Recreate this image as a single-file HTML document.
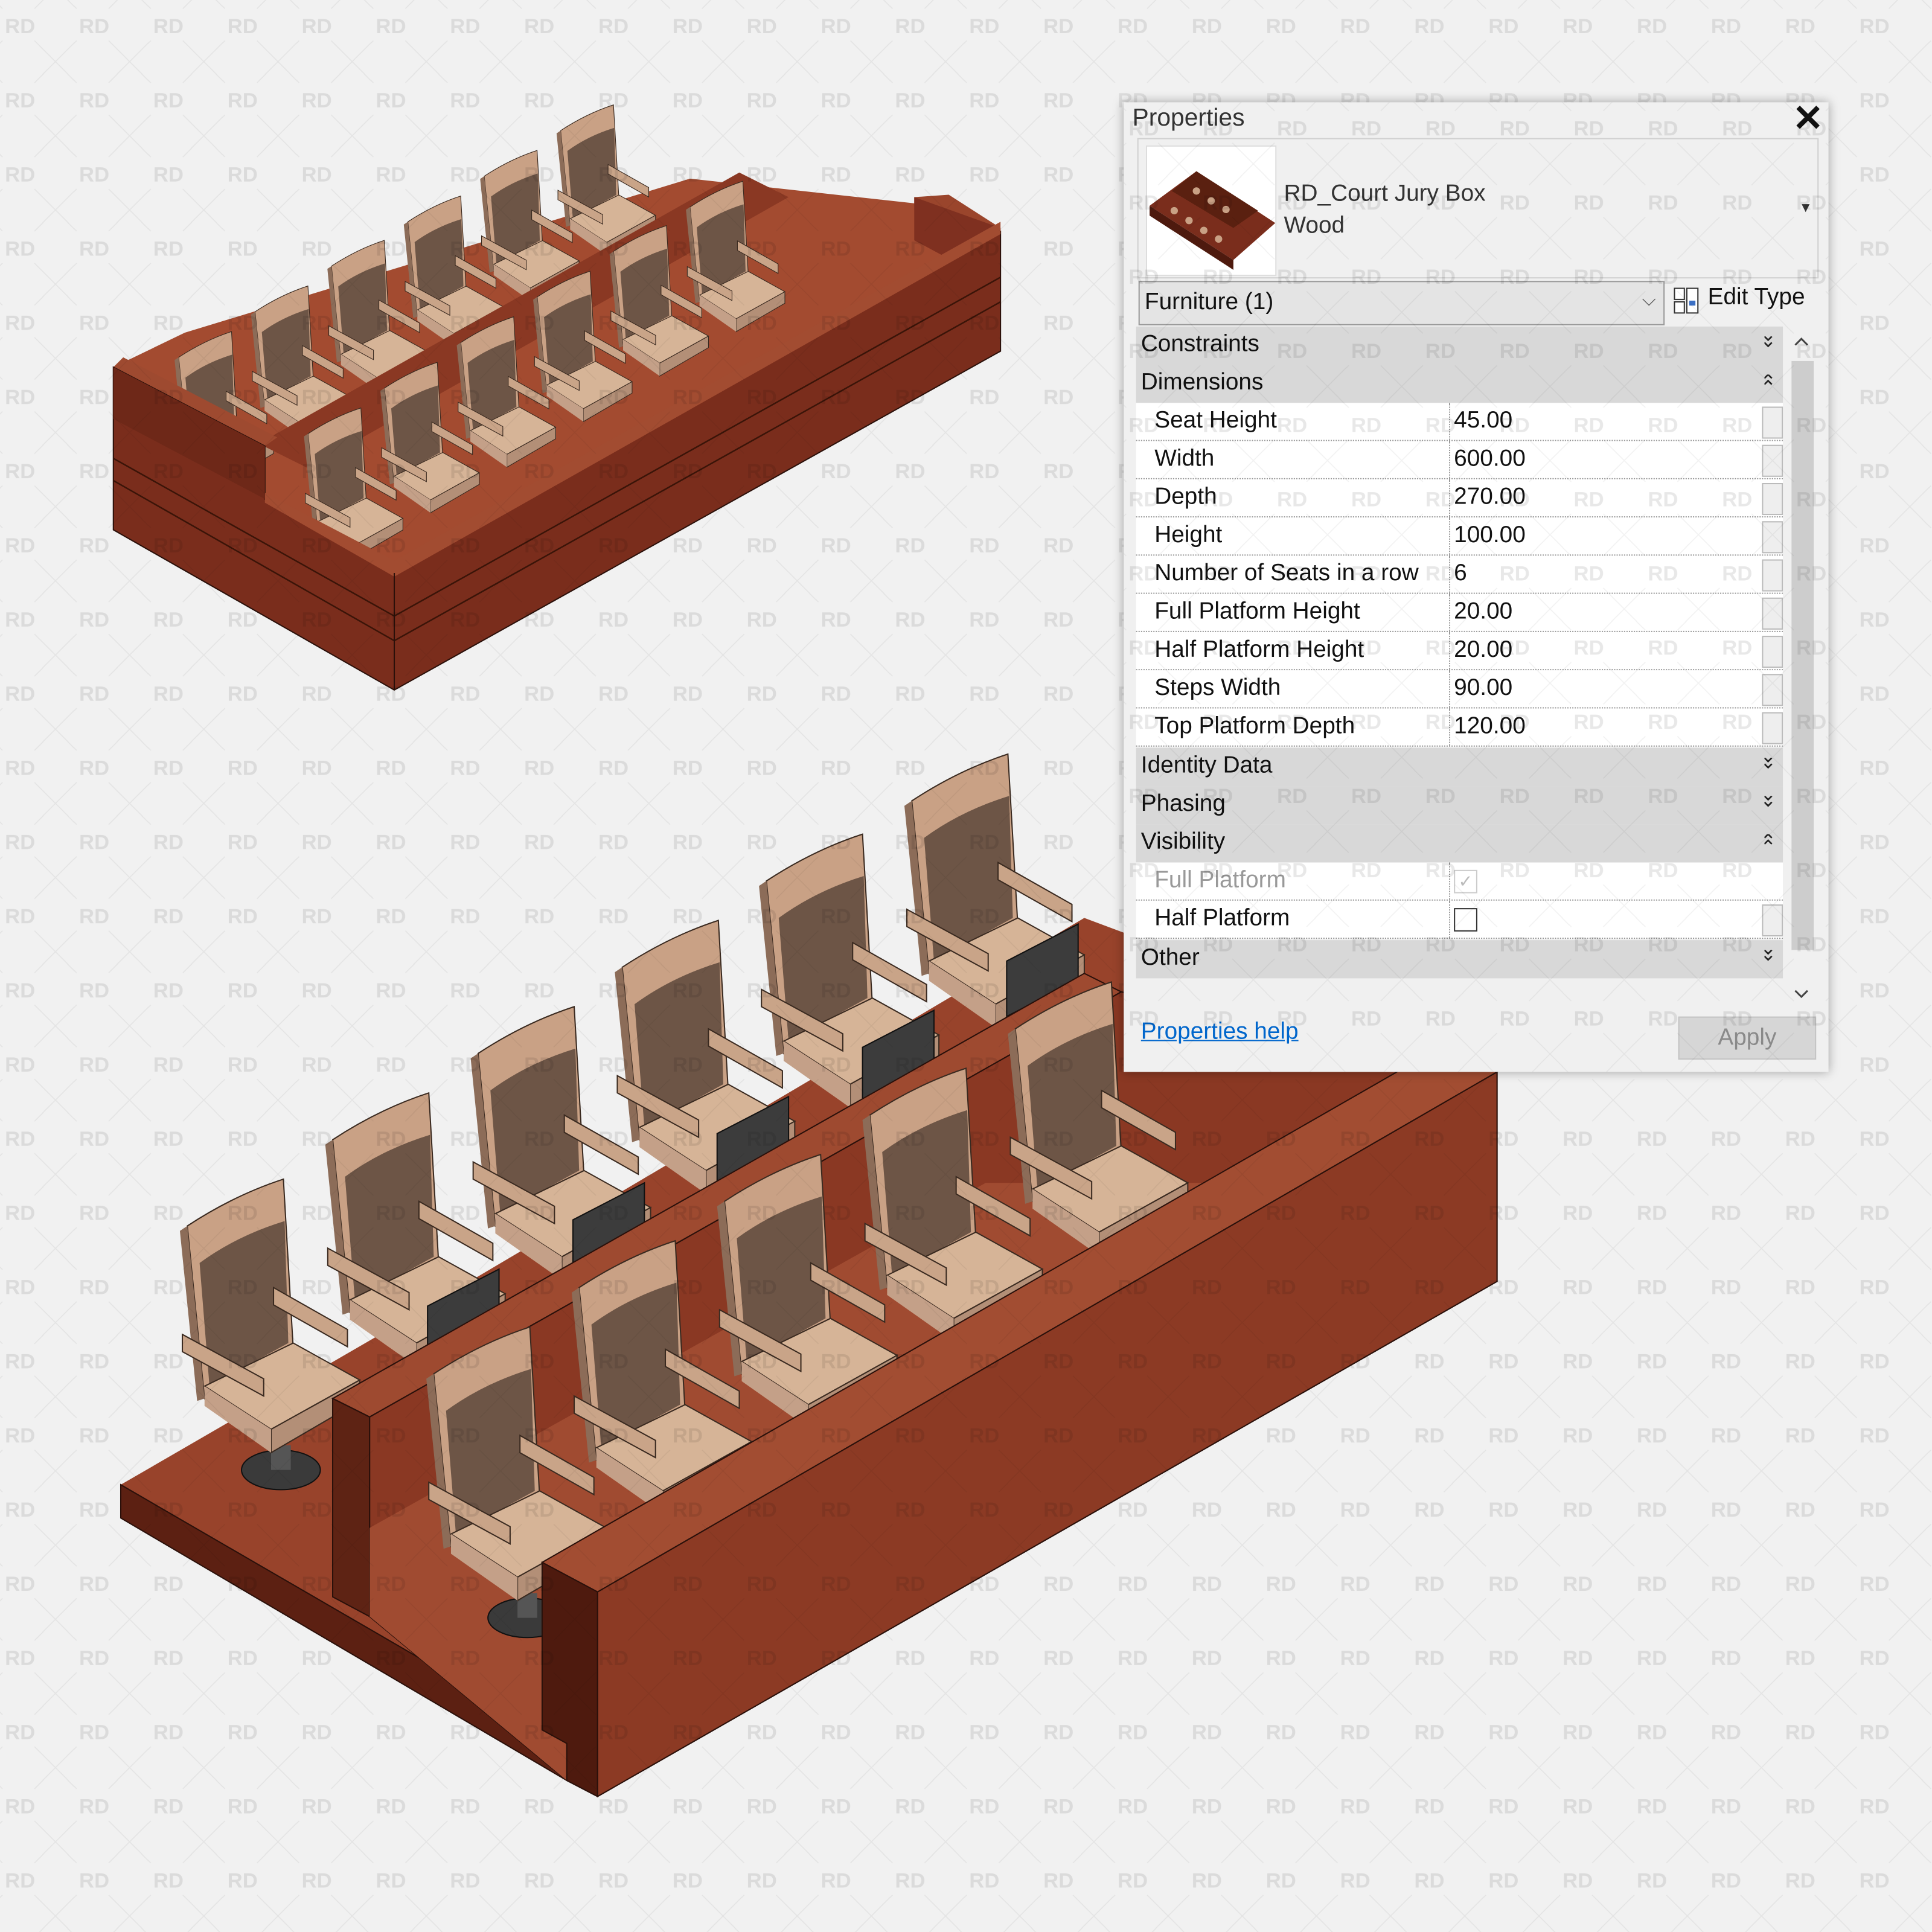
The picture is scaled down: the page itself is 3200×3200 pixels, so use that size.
<!DOCTYPE html>
<html><head><meta charset="utf-8"><style>
html,body{margin:0;padding:0;background:#f1f1f1;}
#wrap{position:relative;width:1568px;height:1568px;transform:scale(2.040816);transform-origin:0 0;overflow:hidden;font-family:"Liberation Sans",sans-serif;}
svg.full{position:absolute;left:0;top:0;}
#panel{position:absolute;left:912px;top:83px;width:572px;height:787px;background:#f0f0f0;box-shadow:0 0 8px rgba(0,0,0,.35);font-size:19px;color:#111;}
.abs{position:absolute;white-space:nowrap;}
.grp{position:absolute;left:10px;width:525px;height:31px;background:#d8d8d8;}
.grp span{position:absolute;left:4px;top:4px;}
.grp svg{position:absolute;right:8px;top:8px;}
.row{position:absolute;left:10px;width:525px;height:30px;background:#fff;border-bottom:1px dotted #999;}
.row .n{position:absolute;left:15px;top:4px;}
.row .v{position:absolute;left:254px;top:0;height:30px;border-left:1px dotted #999;padding-left:3px;line-height:30px;width:250px;}
.row .s{position:absolute;right:0;top:3px;width:15px;height:24px;border:1px solid #bbb;background:#eee;}
</style></head><body><div id="wrap">
<svg class="full" width="1568" height="1568" viewBox="0 0 1568 1568">
<defs>
<g id="chair">
<path d="M0,0 Q38,-25 78,-38 L86,100 L14,140 Z" fill="#c9a185" stroke="#3a2a20" stroke-width="1"/>
<path d="M-6,4 L0,0 L14,140 L8,142 Z" fill="#8c6c58"/>
<path d="M10,30 Q40,8 79,-4 L82,95 L18,130 Z" fill="#6d5546"/>
<path d="M14,130 L86,95 L140,125 L68,165 Z" fill="#d6b497" stroke="#3a2a20" stroke-width="1"/>
<path d="M68,165 L140,125 L140,142 L68,184 Z" fill="#b38f77" stroke="#3a2a20" stroke-width="1"/>
<path d="M68,165 L14,130 L14,146 L68,184 Z" fill="#c4a088"/>
<path d="M-4,88 L62,124 L62,138 L-4,102 Z" fill="#c9a488" stroke="#3a2a20" stroke-width="1"/>
<path d="M70,50 L130,84 L130,98 L70,64 Z" fill="#c9a488" stroke="#3a2a20" stroke-width="1"/>
</g>
<g id="base"><ellipse cx="76" cy="198" rx="32" ry="16" fill="#3a3a3a" stroke="#111"/><rect x="68" y="178" width="16" height="20" fill="#555"/></g>
<g id="dd"><path d="M0,0 L3,3 L6,0 M0,5 L3,8 L6,5" fill="none" stroke="#222" stroke-width="1.3"/></g>
<g id="du"><path d="M0,3 L3,0 L6,3 M0,8 L3,5 L6,8" fill="none" stroke="#222" stroke-width="1.3"/></g>
<pattern id="wm" patternUnits="userSpaceOnUse" width="60.2" height="60.2">
<text x="4" y="27" font-family="Liberation Sans" font-weight="bold" font-size="17" fill="rgba(0,0,0,0.09)">RD</text>
<g stroke="rgba(0,0,0,0.05)" stroke-width="0.8">
<path d="M28,33 L62,67 M62,33 L28,67"/><path d="M-32,33 L2,67 M2,33 L-32,67"/>
<path d="M28,-27 L62,7 M62,-27 L28,7"/><path d="M-32,-27 L2,7 M2,-27 L-32,7"/>
</g></pattern>
</defs>

<!-- TOP MODEL -->
<polygon points="92,298 150,270 560,145 742,165 812,185 320,465 215,405 215,362" fill="#a34b30"/>
<polygon points="742,160 770,158 812,185 812,195 742,170" fill="#9a452c"/>
<polygon points="742,160 742,195 770,210 812,195 812,185" fill="#7f3020"/>
<g transform="translate(145,290) scale(0.55)"><use href="#chair"/></g>
<g transform="translate(207,253) scale(0.55)"><use href="#chair"/></g>
<g transform="translate(269,216) scale(0.55)"><use href="#chair"/></g>
<g transform="translate(331,180) scale(0.55)"><use href="#chair"/></g>
<g transform="translate(393,143) scale(0.55)"><use href="#chair"/></g>
<g transform="translate(455,106) scale(0.55)"><use href="#chair"/></g>
<polygon points="210,360 600,140 640,160 250,380" fill="#8a3823"/>
<g transform="translate(250,352) scale(0.55)"><use href="#chair"/></g>
<g transform="translate(312,315) scale(0.55)"><use href="#chair"/></g>
<g transform="translate(374,278) scale(0.55)"><use href="#chair"/></g>
<g transform="translate(436,241) scale(0.55)"><use href="#chair"/></g>
<g transform="translate(498,204) scale(0.55)"><use href="#chair"/></g>
<g transform="translate(560,168) scale(0.55)"><use href="#chair"/></g>
<polygon points="92,298 100,290 225,355 215,362" fill="#9e4a30"/>
<polygon points="92,298 215,362 215,405 320,465 812,188 812,285 320,560 92,430" fill="#7a2d1c" stroke="#2a100a" stroke-width="1"/>
<polygon points="215,400 320,455 812,180 812,190 320,468 215,408" fill="#a24c31"/>
<polygon points="92,298 215,362 215,405 92,340" fill="#6e2818"/>
<polyline points="92,372 320,500 812,225" fill="none" stroke="#3a1408" stroke-width="1.2"/>
<polyline points="92,390 320,520 812,245" fill="none" stroke="#3a1408" stroke-width="1.2"/>
<line x1="320" y1="465" x2="320" y2="560" stroke="#2a100a"/>

<!-- BOTTOM MODEL -->
<polygon points="98,1205 300,1088 880,745 1215,870 1215,1040 485,1458 460,1445 98,1232" fill="#98432b"/>
<g><use href="#base" transform="translate(152,995)"/><use href="#chair" transform="translate(152,995)"/></g>
<g><use href="#chair" transform="translate(270,925)"/></g>
<g><use href="#chair" transform="translate(388,855)"/></g>
<g><use href="#chair" transform="translate(505,785)"/></g>
<g><use href="#chair" transform="translate(622,715)"/></g>
<g><use href="#chair" transform="translate(740,650)"/></g>
<g fill="#3c3c3c" stroke="#111"><polygon points="347,1060 405,1030 405,1075 347,1105"/><polygon points="465,990 523,960 523,1005 465,1035"/><polygon points="582,920 640,890 640,935 582,965"/><polygon points="700,850 758,820 758,865 700,895"/><polygon points="817,780 875,750 875,795 817,825"/></g>
<polygon points="98,1205 460,1415 460,1445 98,1232" fill="#5c2012" stroke="#2a100a"/>
<polygon points="270,1135 880,790 910,805 300,1150" fill="#9e4a30" stroke="#2a100a"/>
<polygon points="270,1135 300,1150 300,1312 270,1296" fill="#5e2314" stroke="#2a100a"/>
<polygon points="300,1150 910,805 1215,870 1215,1040 485,1458 460,1445 300,1312" fill="#8a3823" stroke="#2a100a"/>
<polygon points="300,1240 800,960 1215,960 1215,1040 485,1458 460,1445 300,1312" fill="#a04b31"/>
<g><use href="#base" transform="translate(352,1115)"/><use href="#chair" transform="translate(352,1115)"/></g>
<g><use href="#chair" transform="translate(470,1045)"/></g>
<g><use href="#chair" transform="translate(588,975)"/></g>
<g><use href="#chair" transform="translate(706,905)"/></g>
<g><use href="#chair" transform="translate(824,835)"/></g>
<polygon points="440,1268 1172,848 1215,870 485,1292" fill="#a24d32" stroke="#2a100a"/>
<polygon points="440,1268 485,1292 485,1458 460,1445 460,1415 440,1404" fill="#4e1a0e" stroke="#2a100a"/>
<polygon points="485,1292 1215,870 1215,1040 485,1458" fill="#8c3a24" stroke="#2a100a"/>

<rect width="1568" height="1568" fill="url(#wm)"/>
</svg>

<div id="panel">
<div class="abs" style="left:7px;top:2px;font-size:20px;color:#333">Properties</div>
<div class="abs" style="right:4px;top:-4px;font-size:30px;font-weight:bold;color:#111">✕</div>
<div class="abs" style="left:11px;top:29px;width:551px;height:112px;border:1px solid #d0d0d0;"></div>
<div class="abs" style="left:18px;top:35px;width:104px;height:104px;background:#fff;border:1px solid #ddd;">
<svg width="104" height="104" viewBox="0 0 104 104"><polygon points="2,48 40,20 104,62 70,92" fill="#7a2d1c"/><polygon points="2,48 70,92 70,100 2,56" fill="#4e1a0e"/><polygon points="20,36 40,20 90,52 70,66" fill="#5a2010"/><g fill="#c9a185"><circle cx="22" cy="52" r="3"/><circle cx="34" cy="60" r="3"/><circle cx="46" cy="68" r="3"/><circle cx="58" cy="75" r="3"/><circle cx="40" cy="36" r="3"/><circle cx="52" cy="44" r="3"/><circle cx="64" cy="51" r="3"/></g></svg></div>
<div class="abs" style="left:130px;top:64px;color:#333">RD_Court Jury Box</div>
<div class="abs" style="left:130px;top:90px;color:#333">Wood</div>
<div class="abs" style="left:548px;top:80px;font-size:11px;color:#333">▼</div>
<div class="abs" style="left:12px;top:145px;width:425px;height:34px;background:#e4e4e4;border:1px solid #9a9a9a;"><span style="position:absolute;left:4px;top:6px">Furniture (1)</span><span style="position:absolute;right:6px;top:6px;font-size:15px;color:#555">⌵</span></div>
<svg class="abs" style="left:446px;top:150px" width="22" height="22" viewBox="0 0 22 22"><rect x="1" y="1" width="8" height="9" fill="#fff" stroke="#333"/><rect x="1" y="12" width="8" height="9" fill="#fff" stroke="#333"/><rect x="11" y="1" width="9" height="20" fill="#fff" stroke="#333"/><rect x="13" y="11" width="5" height="4" fill="#3a6fc4"/></svg>
<div class="abs" style="left:474px;top:148px">Edit Type</div>

<div class="grp" style="top:182px"><span>Constraints</span><svg width="7" height="9"><use href="#dd"/></svg></div>
<div class="grp" style="top:213px"><span>Dimensions</span><svg width="7" height="9"><use href="#du"/></svg></div>
<div class="row" style="top:244px"><span class="n">Seat Height</span><span class="v">45.00</span><span class="s"></span></div>
<div class="row" style="top:275px"><span class="n">Width</span><span class="v">600.00</span><span class="s"></span></div>
<div class="row" style="top:306px"><span class="n">Depth</span><span class="v">270.00</span><span class="s"></span></div>
<div class="row" style="top:337px"><span class="n">Height</span><span class="v">100.00</span><span class="s"></span></div>
<div class="row" style="top:368px"><span class="n">Number of Seats in a row</span><span class="v">6</span><span class="s"></span></div>
<div class="row" style="top:399px"><span class="n">Full Platform Height</span><span class="v">20.00</span><span class="s"></span></div>
<div class="row" style="top:430px"><span class="n">Half Platform Height</span><span class="v">20.00</span><span class="s"></span></div>
<div class="row" style="top:461px"><span class="n">Steps Width</span><span class="v">90.00</span><span class="s"></span></div>
<div class="row" style="top:492px"><span class="n">Top Platform Depth</span><span class="v">120.00</span><span class="s"></span></div>
<div class="grp" style="top:524px"><span>Identity Data</span><svg width="7" height="9"><use href="#dd"/></svg></div>
<div class="grp" style="top:555px"><span>Phasing</span><svg width="7" height="9"><use href="#dd"/></svg></div>
<div class="grp" style="top:586px"><span>Visibility</span><svg width="7" height="9"><use href="#du"/></svg></div>
<div class="row" style="top:617px"><span class="n" style="color:#999">Full Platform</span><span class="v"><span style="display:inline-block;width:17px;height:17px;border:1px solid #ccc;margin-top:6px;color:#bbb;font-size:14px;line-height:17px;text-align:center">✓</span></span></div>
<div class="row" style="top:648px"><span class="n">Half Platform</span><span class="v"><span style="display:inline-block;width:17px;height:17px;border:1px solid #333;margin-top:6px;background:#fff"></span></span><span class="s"></span></div>
<div class="grp" style="top:680px"><span>Other</span><svg width="7" height="9"><use href="#dd"/></svg></div>
<div class="abs" style="left:538px;top:182px;width:24px;height:555px;background:#f0f0f0"></div>
<div class="abs" style="left:542px;top:210px;width:18px;height:478px;background:#cdcdcd"></div>
<svg class="abs" style="left:544px;top:190px" width="12" height="8"><path d="M1,7 L6,2 L11,7" fill="none" stroke="#444" stroke-width="1.5"/></svg>
<svg class="abs" style="left:544px;top:720px" width="12" height="8"><path d="M1,1 L6,6 L11,1" fill="none" stroke="#444" stroke-width="1.5"/></svg>
<div class="abs" style="left:14px;top:744px;color:#0066cc;text-decoration:underline">Properties help</div>
<div class="abs" style="left:450px;top:742px;width:110px;height:33px;background:#d6d6d6;border:1px solid #c4c4c4;color:#8a8a8a;text-align:center;line-height:33px">Apply</div>
<svg style="position:absolute;left:0;top:0" width="572" height="787"><rect x="-912" y="-83" width="1568" height="1568" fill="url(#wm)"/></svg>
</div>
</div></body></html>
